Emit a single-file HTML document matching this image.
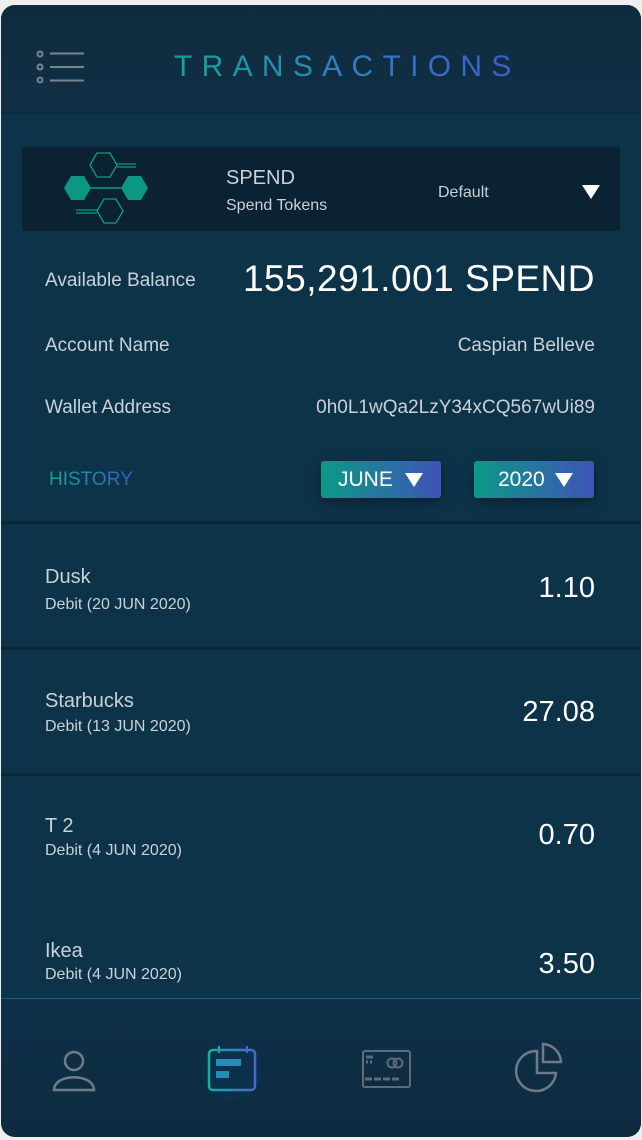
<!DOCTYPE html>
<html><head><style>
body{margin:0;background:#efefef;width:642px;height:1140px;overflow:hidden;font-family:"Liberation Sans",sans-serif;}
.card{position:absolute;left:1px;top:5px;width:640px;height:1132px;border-radius:14px;overflow:hidden;background:#0d3349;}
.hdr{position:absolute;left:0;top:0;width:640px;height:107px;background:linear-gradient(#0f2b3f,#112f45);box-shadow:0 1px 2px rgba(0,0,0,.3)}
.title{position:absolute;left:173px;top:45px;font-size:30px;letter-spacing:9.3px;background:linear-gradient(90deg,#12a596,#2f80c0,#3d5cc9);-webkit-background-clip:text;color:transparent;font-weight:300}
.tok{position:absolute;left:21px;top:142px;width:598px;height:84px;background:#0b2232;border-radius:2px}
.t{position:absolute;color:#c9d1d9;white-space:nowrap}
.w{color:#fff}
.row{position:absolute;left:0;width:640px;height:125px;border-top:3px solid #0a2637}
.btn{position:absolute;top:456px;height:37px;border-radius:3px;background:linear-gradient(90deg,#0a9a86,#3f53b8);color:#fff;font-size:21px;line-height:37px;box-shadow:0 4px 12px rgba(0,0,0,.35)}
.nav{position:absolute;left:0;top:993px;width:640px;height:139px;border-top:1px solid #1e5a7e;background:linear-gradient(#0f3048,#0e2b40)}
</style></head><body>
<div class="card">
<div class="hdr">
<svg style="position:absolute;left:34px;top:44px" width="50" height="40"><g fill="none" stroke="#7a8592" stroke-width="2"><circle cx="5" cy="5" r="2.5"/><circle cx="5" cy="18" r="2.5"/><circle cx="5" cy="31" r="2.5"/><path d="M15 4.5H49M15 18H49M15 31.5H49"/></g></svg>
<div class="title">TRANSACTIONS</div>
</div>
<div class="tok">
<svg style="position:absolute;left:0;top:0" width="140" height="84"><g fill="none" stroke="#129a88" stroke-width="1.3"><polygon points="68,18 75,6 88,6 95,18 88,30 75,30"/><path d="M95,17H114M95,20H114"/><polygon points="75,64 82,52 94,52 101,64 94,76 82,76"/><path d="M54,63H75M54,66H75"/></g><g fill="#0c9784"><polygon points="42,41 49,29 62,29 69,41 62,53 49,53"/><polygon points="99,41 106,29 119,29 126,41 119,53 106,53"/></g><path d="M69,41H99" stroke="#129a88" stroke-width="1.5"/></svg>
<div class="t" style="left:204px;top:20px;font-size:20px">SPEND</div>
<div class="t" style="left:204px;top:50px;font-size:16px">Spend Tokens</div>
<div class="t" style="left:416px;top:37px;font-size:16px">Default</div>
<svg style="position:absolute;left:559px;top:37px" width="20" height="16"><polygon points="1,1 19,1 10,15" fill="#fff"/></svg>
</div>
<div class="t" style="left:44px;top:265px;font-size:19px">Available Balance</div>
<div class="t w" style="right:46px;top:253px;font-size:37px;letter-spacing:0.5px">155,291.001 SPEND</div>
<div class="t" style="left:44px;top:330px;font-size:19px">Account Name</div>
<div class="t" style="right:46px;top:330px;font-size:19px">Caspian Belleve</div>
<div class="t" style="left:44px;top:392px;font-size:19px">Wallet Address</div>
<div class="t" style="right:46px;top:392px;font-size:19px">0h0L1wQa2LzY34xCQ567wUi89</div>
<div class="t" style="left:48px;top:464px;font-size:19px;background:linear-gradient(90deg,#12a596,#3d5cc9);-webkit-background-clip:text;color:transparent">HISTORY</div>
<div class="btn" style="left:320px;width:120px"><span style="margin-left:17px">JUNE</span><svg style="position:absolute;left:84px;top:12px" width="18" height="14"><polygon points="0,0 18,0 9,14" fill="#fff"/></svg></div>
<div class="btn" style="left:473px;width:120px"><span style="margin-left:24px">2020</span><svg style="position:absolute;left:81px;top:12px" width="18" height="14"><polygon points="0,0 18,0 9,14" fill="#fff"/></svg></div>
<div class="row" style="top:516px"><div class="t" style="left:44px;top:42px;font-size:20px">Dusk</div><div class="t" style="left:44px;top:72px;font-size:16px">Debit (20 JUN 2020)</div><div class="t w" style="right:46px;top:48px;font-size:29px">1.10</div></div>
<div class="row" style="top:642px"><div class="t" style="left:44px;top:40px;font-size:20px">Starbucks</div><div class="t" style="left:44px;top:68px;font-size:16px">Debit (13 JUN 2020)</div><div class="t w" style="right:46px;top:46px;font-size:29px">27.08</div></div>
<div class="row" style="top:768px"><div class="t" style="left:44px;top:39px;font-size:20px">T 2</div><div class="t" style="left:44px;top:66px;font-size:16px">Debit (4 JUN 2020)</div><div class="t w" style="right:46px;top:43px;font-size:29px">0.70</div></div>
<div class="row" style="top:894px;border-top-color:transparent"><div class="t" style="left:44px;top:38px;font-size:20px">Ikea</div><div class="t" style="left:44px;top:64px;font-size:16px">Debit (4 JUN 2020)</div><div class="t w" style="right:46px;top:46px;font-size:29px">3.50</div></div>
<div class="nav">
<svg style="position:absolute;left:50px;top:50px" width="46" height="46"><g fill="none" stroke="#6f7b88" stroke-width="2.5"><circle cx="23" cy="12" r="9"/><path d="M3,41 C3,24 43,24 43,41 Z"/></g></svg>
<svg style="position:absolute;left:200px;top:42px" width="60" height="60"><defs><linearGradient id="g" x1="0" x2="1"><stop offset="0" stop-color="#15b0a0"/><stop offset="1" stop-color="#4b63d3"/></linearGradient></defs><circle cx="30" cy="30" r="30" fill="#0c3450" opacity=".6"/><rect x="8" y="9" width="46" height="40" rx="4" fill="none" stroke="url(#g)" stroke-width="2.5"/><path d="M18,5V12M46,5V12" stroke="url(#g)" stroke-width="2"/><rect x="15" y="18" width="25" height="7" fill="#1f8fb5"/><rect x="15" y="30" width="13" height="7" fill="#1f8fb5"/></svg>
<svg style="position:absolute;left:360px;top:50px" width="52" height="44"><g fill="none" stroke="#5f6b78" stroke-width="2"><rect x="2" y="2" width="47" height="36" rx="2"/><circle cx="31" cy="14" r="4.5"/><circle cx="37" cy="14" r="4.5"/><path d="M5,8H12M5,13H7M9,13H11M4,30H11M13,30H20M22,30H29M31,30H38" stroke-width="3"/></g></svg>
<svg style="position:absolute;left:513px;top:42px" width="52" height="56"><g fill="none" stroke="#6f7b88" stroke-width="2.5"><path d="M23,10 A20,20 0 1 0 42,32 L23,32 Z"/><path d="M29,3 A19,19 0 0 1 47,21 L29,21 Z"/></g></svg>
</div>
</div>
</body></html>
